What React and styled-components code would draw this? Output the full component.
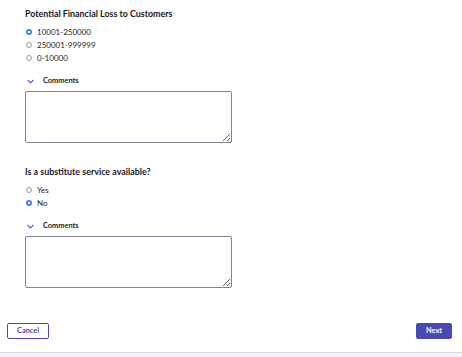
import React from "react";
import styled, { createGlobalStyle } from "styled-components";

const Global = createGlobalStyle`
  html, body { margin: 0; padding: 0; background: #f4f4f8; }
  body { font-family: Lato, "Open Sans", sans-serif; color: #16161d; }
  * { box-sizing: border-box; }
`;

const Page = styled.div`
  width: 462px;
  height: 357px;
  display: flex;
  flex-direction: column;
  background: #f4f4f8;
`;

const Main = styled.div`
  height: 353px;
  background: #ffffff;
  border-bottom: 1px solid #d9d9e2;
  display: flex;
  flex-direction: column;
`;

const Form = styled.div`
  flex: 1;
  padding: 8px 0 0 25px;
  display: flex;
  flex-direction: column;
`;

const Section = styled.div`
  display: flex;
  flex-direction: column;
  margin-bottom: ${(p) => p.$mb || 0}px;
`;

const Question = styled.div`
  font-size: 8.9px;
  font-weight: 700;
  line-height: 12px;
  margin-bottom: 7px;
  color: #16161d;
`;

const Options = styled.div`
  display: flex;
  flex-direction: column;
  gap: 3px;
`;

const Option = styled.label`
  display: flex;
  align-items: center;
  gap: 5px;
  height: 10px;
  font-size: 8px;
  line-height: 10px;
  color: #1c1c24;
`;

const Radio = styled.span`
  width: 6px;
  height: 6px;
  border-radius: 50%;
  margin-left: 1px;
  flex: none;
  border: ${(p) => (p.$on ? "none" : "0.8px solid #9a9aa2")};
  background: ${(p) =>
    p.$on ? "radial-gradient(circle, #ffffff 0 0.9px, #3f86f0 1.4px)" : "#fff"};
`;

const CommentsToggle = styled.div`
  display: flex;
  align-items: center;
  gap: 9px;
  margin: 13px 0 5px 2px;
  font-size: 7.4px;
  font-weight: 700;
  line-height: 10px;
  color: #1c1c24;
`;

const TextArea = styled.textarea`
  width: 207px;
  height: 52px;
  border: 1px solid #7e8594;
  border-radius: 2px;
  resize: vertical;
  margin: 0;
  font-family: inherit;
  background: #fff;
  display: block;
`;

const Footer = styled.div`
  height: 29px;
  display: flex;
  justify-content: space-between;
  align-items: flex-start;
  padding: 0 10px 0 7px;
`;

const Button = styled.button`
  height: 16px;
  padding: 0 ${(p) => p.$px}px;
  border-radius: 2px;
  border: 1px solid #4b48b2;
  background: ${(p) => (p.$primary ? "#4b48b2" : "#fff")};
  color: ${(p) => (p.$primary ? "#fff" : "#4b48b2")};
  font-family: Lato, sans-serif;
  font-size: 7.4px;
  font-weight: 700;
  line-height: 14px;
  cursor: pointer;
`;

const Chevron = () => (
  <svg width="7" height="5" viewBox="0 0 7 5">
    <path d="M0.6 1 L3.5 3.9 L6.4 1" fill="none" stroke="#4b62e0" strokeWidth="1.1" />
  </svg>
);

const Question1 = ["10001-250000", "250001-999999", "0-10000"];
const Question2 = ["Yes", "No"];

const Block = ({ title, options, selected, mb }) => (
  <Section $mb={mb}>
    <Question>{title}</Question>
    <Options>
      {options.map((o) => (
        <Option key={o}>
          <Radio $on={o === selected} />
          {o}
        </Option>
      ))}
    </Options>
    <CommentsToggle>
      <Chevron />
      Comments
    </CommentsToggle>
    <TextArea />
  </Section>
);

export default function App() {
  return (
    <Page>
      <Global />
      <Main>
        <Form>
          <Block
            title="Potential Financial Loss to Customers"
            options={Question1}
            selected="10001-250000"
            mb={23}
          />
          <Block
            title="Is a substitute service available?"
            options={Question2}
            selected="No"
          />
        </Form>
        <Footer>
          <Button $px={9}>Cancel</Button>
          <Button $primary $px={9}>Next</Button>
        </Footer>
      </Main>
    </Page>
  );
}
